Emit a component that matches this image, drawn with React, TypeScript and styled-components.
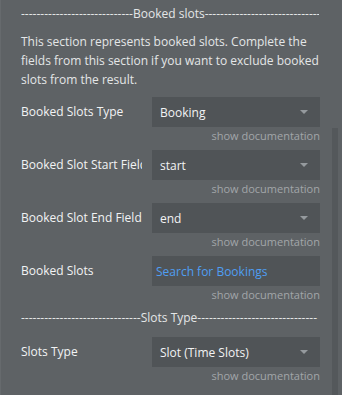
import styled, { createGlobalStyle } from 'styled-components'

const GlobalStyle = createGlobalStyle`
  html, body {
    margin: 0;
    padding: 0;
    background: #5e6265;
  }
  body {
    font-family: 'Open Sans', 'Noto Sans', sans-serif;
  }
`

const Page = styled.div`
  display: flex;
  width: 342px;
  height: 395px;
  overflow: hidden;
  background: #5e6265;
  border-left: 1px solid #666a6d;
  box-sizing: border-box;
`

const Content = styled.div`
  flex: 1;
  min-width: 0;
  display: flex;
  flex-direction: column;
  padding: 5px 13px 0 20px;
`

const Track = styled.div`
  width: 8px;
  padding: 128px 2px 0 0;
`

const Thumb = styled.div`
  width: 6px;
  height: 100%;
  background: #54585b;
`

const SectionTitle = styled.div<{ $gap: number }>`
  margin-top: ${(p) => p.$gap}px;
  height: 18px;
  line-height: 18px;
  font-size: 12px;
  color: #e4e6e7;
  white-space: nowrap;
  overflow: hidden;
`

const Intro = styled.p`
  margin: 9px 0 0;
  font-size: 12px;
  line-height: 19px;
  color: #e4e6e7;
`

const Field = styled.div<{ $gap: number }>`
  margin-top: ${(p) => p.$gap}px;
  display: grid;
  grid-template-columns: 131px 168px;
`

const Label = styled.div`
  height: 30px;
  line-height: 30px;
  width: 121px;
  font-size: 12px;
  color: #f2f3f4;
  white-space: nowrap;
  overflow: hidden;
`

const Box = styled.div<{ $link?: boolean }>`
  height: 30px;
  display: flex;
  align-items: center;
  justify-content: space-between;
  padding: 0 ${(p) => (p.$link ? 4 : 8)}px;
  background: #505457;
  font-size: 12px;
  color: ${(p) => (p.$link ? '#4f9ef2' : '#f2f3f4')};
`

const Caret = styled.span`
  width: 0;
  height: 0;
  margin-right: 4px;
  border-left: 4px solid transparent;
  border-right: 4px solid transparent;
  border-top: 4px solid #959a9e;
`

const Docs = styled.div`
  grid-column: 2;
  margin-top: 1px;
  height: 16px;
  line-height: 16px;
  text-align: right;
  font-size: 11px;
  color: #a2a6a9;
`

const dashes = (n: number) => '-'.repeat(n)

type FieldProps = {
  label: string
  value: string
  gap: number
  link?: boolean
}

const FormField = ({ label, value, gap, link }: FieldProps) => (
  <Field $gap={gap}>
    <Label>{label}</Label>
    <Box $link={link}>
      <span>{value}</span>
      {!link && <Caret />}
    </Box>
    <Docs>show documentation</Docs>
  </Field>
)

export default function App() {
  return (
    <>
      <GlobalStyle />
      <Page>
        <Content>
          <SectionTitle $gap={0}>
            {dashes(29)}Booked slots{dashes(30)}
          </SectionTitle>
          <Intro>
            This section represents booked slots. Complete the fields from this section if you want
            to exclude booked slots from the result.
          </Intro>
          <FormField gap={8} label="Booked Slots Type" value="Booking" />
          <FormField gap={6} label="Booked Slot Start Field" value="start" />
          <FormField gap={6} label="Booked Slot End Field" value="end" />
          <FormField gap={6} label="Booked Slots" value="Search for Bookings" link />
          <SectionTitle $gap={6}>
            {dashes(31)}Slots Type{dashes(31)}
          </SectionTitle>
          <FormField gap={10} label="Slots Type" value="Slot (Time Slots)" />
        </Content>
        <Track>
          <Thumb />
        </Track>
      </Page>
    </>
  )
}
